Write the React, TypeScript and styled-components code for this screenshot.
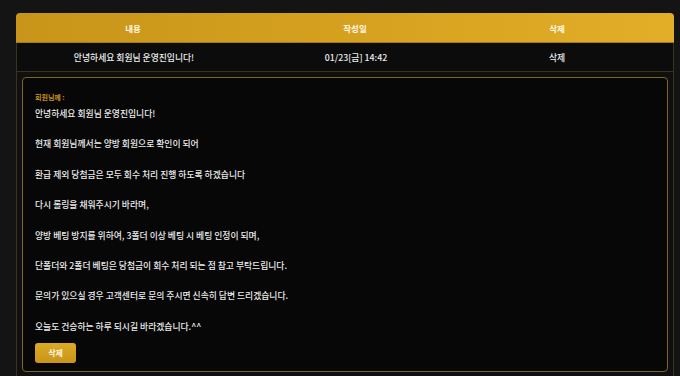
import React from "react";
import styled, { createGlobalStyle } from "styled-components";

const Global = createGlobalStyle`
  html, body { margin: 0; padding: 0; background: #141414; }
  body { font-family: "Noto Sans CJK KR", "Noto Sans", sans-serif; }
  * { box-sizing: border-box; }
`;

const Page = styled.div`
  width: 680px;
  height: 376px;
  overflow: hidden;
  background: #141414;
  padding: 13px 6px 0 16px;
`;

const Table = styled.div`
  border-left: 1px solid #3a3323;
  border-right: 1px solid #3a3323;
  border-radius: 5px 5px 0 0;
  background: #101010;
  height: 400px;
`;

const HeaderRow = styled.div`
  display: grid;
  grid-template-columns: 234px 210px 1fr;
  height: 30px;
  align-items: center;
  margin: 0 -1px;
  border-radius: 4px 4px 0 0;
  background: linear-gradient(90deg, #c8951a 0%, #d7a21f 55%, #e2ad27 100%);
  border-bottom: 1px solid #a37a14;
`;

const HeadCell = styled.div<{ $pr?: number }>`
  text-align: center;
  color: #fff8e6;
  font-size: 8.5px;
  font-weight: 700;
  padding-right: ${(p) => p.$pr ?? 0}px;
`;

const DataRow = styled.div`
  display: grid;
  grid-template-columns: 234px 210px 1fr;
  height: 29px;
  align-items: center;
  background: #0c0c0c;
  border-bottom: 1px solid #3a321c;
`;

const Cell = styled.div<{ $pr?: number }>`
  text-align: center;
  color: #ececec;
  font-size: 8.8px;
  font-weight: 500;
  padding-right: ${(p) => p.$pr ?? 0}px;
`;

const DetailWrap = styled.div`
  padding: 5px 5px 0 5px;
`;

const DetailBox = styled.div`
  border: 1px solid #7e6421;
  border-radius: 4px;
  background: #070707;
  padding: 13px 12px 8px 12px;
  height: 295px;
`;

const Label = styled.div`
  color: #c8901e;
  font-size: 7px;
  font-weight: 600;
  line-height: 12px;
  margin-bottom: 3px;
`;

const Body = styled.div`
  color: #ececec;
  font-size: 8.8px;
  font-weight: 500;
  line-height: 15.2px;
`;

const Line = styled.p`
  margin: 0 0 15.2px 0;
  &:last-child { margin-bottom: 0; }
`;

const DeleteButton = styled.button`
  margin-top: 9px;
  width: 41px;
  height: 20px;
  border: none;
  border-radius: 3px;
  background: linear-gradient(180deg, #dcaa26, #c8951a);
  color: #fff6e0;
  font-family: inherit;
  font-size: 8px;
  font-weight: 700;
  padding: 0;
`;

const lines = [
  "안녕하세요 회원님 운영진입니다!",
  "현재 회원님께서는 양방 회원으로 확인이 되어",
  "환급 제외 당첨금은 모두 회수 처리 진행 하도록 하겠습니다",
  "다시 롤링을 채워주시기 바라며,",
  "양방 베팅 방지를 위하여, 3폴더 이상 베팅 시 베팅 인정이 되며,",
  "단폴더와 2폴더 베팅은 당첨금이 회수 처리 되는 점 참고 부탁드립니다.",
  "문의가 있으실 경우 고객센터로 문의 주시면 신속히 답변 드리겠습니다.",
  "오늘도 건승하는 하루 되시길 바라겠습니다.^^",
];

export default function App() {
  return (
    <>
      <Global />
      <Page>
        <Table>
          <HeaderRow>
            <HeadCell>내용</HeadCell>
            <HeadCell>작성일</HeadCell>
            <HeadCell $pr={20}>삭제</HeadCell>
          </HeaderRow>
          <DataRow>
            <Cell>안녕하세요 회원님 운영진입니다!</Cell>
            <Cell>01/23[금] 14:42</Cell>
            <Cell $pr={20}>삭제</Cell>
          </DataRow>
          <DetailWrap>
            <DetailBox>
              <Label>회원님께 :</Label>
              <Body>
                {lines.map((l, i) => (
                  <Line key={i}>{l}</Line>
                ))}
              </Body>
              <DeleteButton>삭제</DeleteButton>
            </DetailBox>
          </DetailWrap>
        </Table>
      </Page>
    </>
  );
}
